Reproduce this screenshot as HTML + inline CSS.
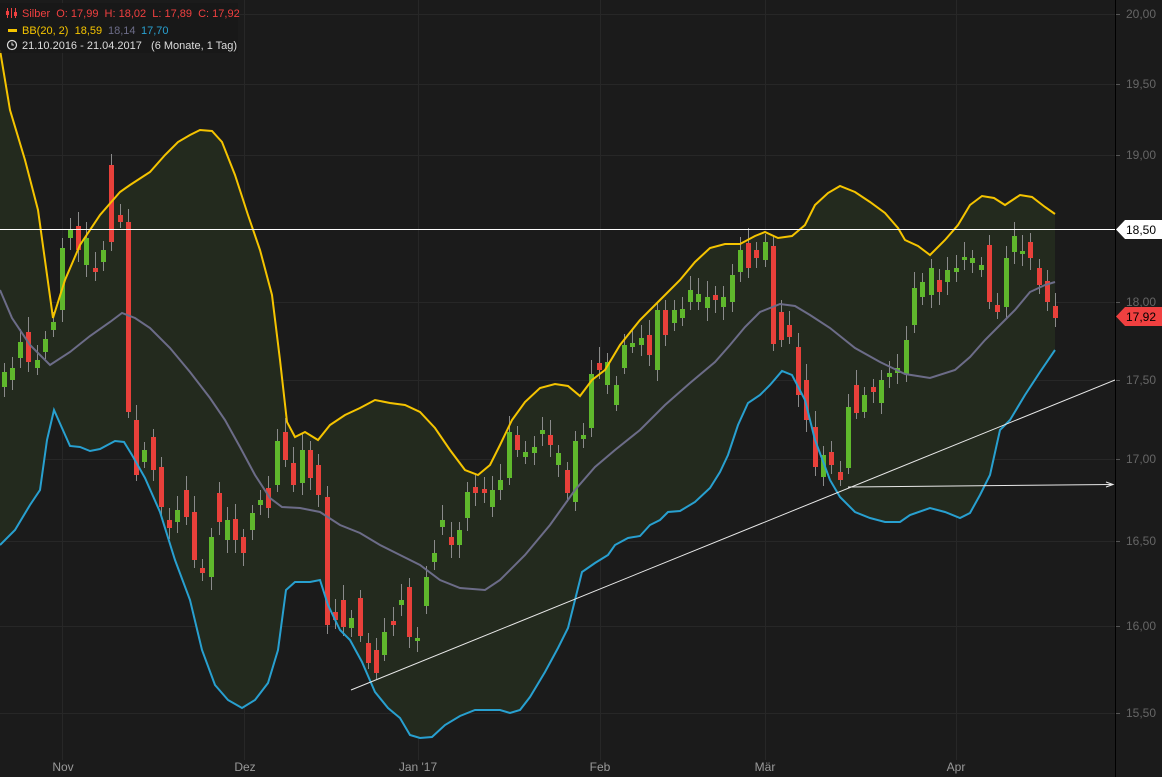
<!DOCTYPE html>
<html><head><meta charset="utf-8"><style>
html,body{margin:0;padding:0;background:#1b1b1b;width:1162px;height:777px;overflow:hidden}
svg{display:block;font-family:"Liberation Sans",sans-serif}
.pre{white-space:pre}
</style></head><body>
<svg id="s" width="1162" height="777" xmlns="http://www.w3.org/2000/svg">
<rect width="1162" height="777" fill="#1b1b1b"/>
<g stroke="#272727" stroke-width="1">
<line x1="0" y1="14.5" x2="1115" y2="14.5"/><line x1="0" y1="84.5" x2="1115" y2="84.5"/><line x1="0" y1="155.5" x2="1115" y2="155.5"/><line x1="0" y1="302.5" x2="1115" y2="302.5"/><line x1="0" y1="380.5" x2="1115" y2="380.5"/><line x1="0" y1="459.5" x2="1115" y2="459.5"/><line x1="0" y1="541.5" x2="1115" y2="541.5"/><line x1="0" y1="626.5" x2="1115" y2="626.5"/><line x1="0" y1="713.5" x2="1115" y2="713.5"/>
<line x1="62.5" y1="0" x2="62.5" y2="760"/><line x1="244.5" y1="0" x2="244.5" y2="760"/><line x1="418.5" y1="0" x2="418.5" y2="760"/><line x1="600.5" y1="0" x2="600.5" y2="760"/><line x1="765.5" y1="0" x2="765.5" y2="760"/><line x1="956.5" y1="0" x2="956.5" y2="760"/>
</g>
<polygon id="fill" fill="#232a1e"/>
<g id="candles"></g>
<polyline id="mid" fill="none" stroke="#6c6c88" stroke-width="2"/>
<polyline id="up" fill="none" stroke="#f5c400" stroke-width="2"/>
<polyline id="lo" fill="none" stroke="#28a0d0" stroke-width="2"/>
<line x1="0" y1="229.5" x2="1115" y2="229.5" stroke="#fff" stroke-width="1"/>
<line x1="351" y1="690" x2="1115" y2="380" stroke="#e8e8e8" stroke-width="1"/>
<line x1="848" y1="487" x2="1112" y2="484.5" stroke="#e8e8e8" stroke-width="1"/>
<path d="M1106 482 L1113 484.5 L1106 487" fill="none" stroke="#e8e8e8"/>
<line x1="1115.5" y1="0" x2="1115.5" y2="777" stroke="#000" stroke-width="1"/>
<g fill="#666" font-size="12">
<text x="1126" y="18">20,00</text><text x="1126" y="88">19,50</text><text x="1126" y="159">19,00</text><text x="1126" y="306">18,00</text><text x="1126" y="384">17,50</text><text x="1126" y="463">17,00</text><text x="1126" y="545">16,50</text><text x="1126" y="630">16,00</text><text x="1126" y="717">15,50</text>
</g>
<g stroke="#555"><line x1="1116" y1="14.5" x2="1120" y2="14.5"/><line x1="1116" y1="84.5" x2="1120" y2="84.5"/><line x1="1116" y1="155.5" x2="1120" y2="155.5"/><line x1="1116" y1="302.5" x2="1120" y2="302.5"/><line x1="1116" y1="380.5" x2="1120" y2="380.5"/><line x1="1116" y1="459.5" x2="1120" y2="459.5"/><line x1="1116" y1="541.5" x2="1120" y2="541.5"/><line x1="1116" y1="626.5" x2="1120" y2="626.5"/><line x1="1116" y1="713.5" x2="1120" y2="713.5"/></g>
<path d="M1116 229.5 L1125 220 H1162 V239 H1125 Z" fill="#fff"/>
<text x="1126" y="234" font-size="12" fill="#000">18,50</text>
<path d="M1116 316.5 L1125 307 H1162 V326 H1125 Z" fill="#f04040"/>
<text x="1126" y="321" font-size="12" fill="#000">17,92</text>
<g fill="#999" font-size="12" text-anchor="middle">
<text x="63" y="771">Nov</text><text x="245" y="771">Dez</text><text x="418" y="771">Jan '17</text><text x="600" y="771">Feb</text><text x="765" y="771">Mär</text><text x="956" y="771">Apr</text>
</g>
<rect x="0" y="3" width="238" height="50" fill="#171717" opacity="0.85"/>
<g font-size="11">
<g stroke="#f04040" stroke-width="1"><line x1="7.5" y1="8" x2="7.5" y2="18"/><line x1="11.5" y1="8" x2="11.5" y2="18"/><line x1="15.5" y1="8" x2="15.5" y2="18"/></g>
<rect x="6" y="11" width="3" height="4" fill="#f04040"/><rect x="14" y="12" width="3" height="4" fill="#f04040"/>
<text class="pre" x="22" y="17" fill="#f04040">Silber  O: 17,99  H: 18,02  L: 17,89  C: 17,92</text>
<rect x="8" y="29" width="9" height="3" fill="#f5c400"/>
<text class="pre" x="22" y="34" fill="#f5c400">BB(20, 2)  18,59</text>
<text x="108" y="34" fill="#6c6c88">18,14</text>
<text x="141" y="34" fill="#28a0d0">17,70</text>
<circle cx="12" cy="45" r="4.5" fill="none" stroke="#ddd" stroke-width="1.2"/>
<path d="M12 42.5 V45 H14" fill="none" stroke="#ddd" stroke-width="1"/>
<text class="pre" x="22" y="49" fill="#ddd">21.10.2016 - 21.04.2017   (6 Monate, 1 Tag)</text>
</g>
</svg>
<script>
var up=[[0,50],[10,110],[25,160],[38,210],[53,318],[65,280],[80,245],[100,215],[120,192],[130,185],[150,172],[165,155],[178,142],[190,135],[200,130],[212,131],[222,142],[235,175],[248,215],[260,250],[272,295],[280,360],[287,422],[295,437],[305,432],[318,440],[330,425],[345,415],[360,408],[375,400],[390,403],[405,405],[420,412],[435,428],[450,450],[465,470],[478,475],[490,465],[500,445],[512,420],[525,402],[540,388],[555,384],[568,386],[580,396],[592,380],[605,370],[620,345],[640,320],[660,300],[680,280],[695,262],[710,248],[725,244],[740,244],[755,236],[765,232],[778,238],[792,236],[805,225],[815,205],[828,193],[840,186],[855,192],[870,202],[885,213],[898,228],[905,240],[918,246],[930,255],[945,240],[958,225],[970,205],[982,196],[994,198],[1005,205],[1020,195],[1032,197],[1045,207],[1055,214]];
var mid=[[0,290],[12,318],[30,345],[50,365],[70,352],[90,336],[110,322],[122,313],[135,318],[150,328],[170,348],[190,372],[210,398],[225,420],[240,447],[255,475],[270,498],[282,507],[300,508],[320,512],[340,525],[360,533],[380,545],[400,555],[420,565],[440,580],[460,588],[485,590],[500,580],[525,555],[550,525],[575,490],[595,467],[615,450],[640,430],[665,405],[690,383],[715,362],[730,345],[745,327],[760,312],[780,304],[795,306],[810,315],[830,328],[855,348],[880,362],[905,374],[930,378],[955,370],[970,357],[985,340],[1000,325],[1015,310],[1030,292],[1045,285],[1055,282]];
var lo=[[0,545],[15,530],[30,505],[40,490],[47,440],[54,410],[62,428],[70,446],[80,447],[90,451],[100,449],[115,441],[124,442],[132,455],[145,478],[160,512],[175,560],[190,600],[202,650],[215,685],[228,700],[242,708],[255,700],[268,683],[278,650],[286,590],[295,582],[310,582],[320,580],[328,605],[340,630],[350,640],[362,662],[375,692],[388,708],[400,718],[410,735],[420,738],[432,737],[445,725],[460,716],[475,710],[500,710],[510,713],[520,710],[530,697],[545,672],[558,648],[568,628],[582,572],[595,563],[608,555],[615,545],[628,538],[640,536],[650,525],[660,520],[668,512],[680,511],[695,502],[710,488],[720,472],[728,455],[738,425],[748,403],[760,395],[770,385],[782,371],[792,375],[805,400],[815,440],[830,480],[840,497],[855,512],[870,518],[885,522],[900,522],[910,515],[930,508],[945,512],[960,518],[970,513],[980,495],[990,475],[1000,430],[1010,420],[1025,395],[1040,372],[1055,350]];
function s(a){return a.map(function(p){return p.join(',')}).join(' ')}
document.getElementById('up').setAttribute('points',s(up));
document.getElementById('mid').setAttribute('points',s(mid));
document.getElementById('lo').setAttribute('points',s(lo));
document.getElementById('fill').setAttribute('points',s(up)+' '+s(lo.slice().reverse()));
var c=[[4,'g',372,387],[12,'g',368,380],[20,'g',342,358],[28,'r',332,362],[37,'g',360,368],[45,'g',339,352],[53,'g',322,330],[62,'g',248,310],[70,'g',230,238],[78,'r',226,250],[86,'g',238,265],[95,'r',268,272],[103,'g',250,262],[111,'r',165,242],[120,'r',215,222],[128,'r',222,412],[136,'r',420,475],[144,'g',450,462],[153,'r',437,470],[161,'r',467,507],[169,'r',520,528],[177,'g',510,522],[186,'r',490,517],[194,'r',512,560],[202,'r',568,573],[211,'g',537,577],[219,'r',493,522],[227,'g',520,540],[235,'r',519,540],[243,'r',537,553],[252,'g',513,530],[260,'g',500,505],[268,'r',488,508],[277,'g',441,485],[285,'r',432,460],[293,'r',463,485],[302,'g',450,483],[310,'r',450,478],[318,'r',465,495],[327,'r',497,625],[335,'r',612,620],[343,'r',600,627],[351,'g',618,628],[360,'r',598,636],[368,'r',643,663],[376,'r',650,673],[384,'g',632,655],[393,'r',621,625],[401,'g',600,605],[409,'r',587,637],[417,'g',638,641],[426,'g',577,606],[434,'g',553,562],[442,'g',520,527],[451,'r',537,545],[459,'g',530,545],[467,'g',492,518],[475,'r',487,493],[484,'r',489,493],[492,'g',490,507],[500,'g',480,490],[509,'g',432,478],[517,'r',435,450],[525,'g',452,457],[534,'g',447,453],[542,'g',430,434],[550,'r',435,445],[558,'g',453,465],[567,'r',470,493],[575,'g',441,502],[583,'g',435,439],[591,'g',374,428],[599,'r',363,370],[607,'g',362,385],[616,'g',385,405],[624,'g',345,368],[632,'g',343,347],[641,'g',338,345],[649,'r',335,355],[657,'g',310,370],[665,'r',310,335],[674,'g',310,323],[682,'g',309,318],[690,'g',290,302],[698,'g',294,302],[707,'g',297,308],[715,'r',295,300],[723,'g',297,307],[732,'g',275,302],[740,'g',250,272],[748,'r',243,268],[756,'r',250,258],[765,'g',242,260],[773,'r',246,344],[781,'r',312,340],[789,'r',325,337],[798,'r',347,395],[806,'r',380,420],[815,'r',427,467],[823,'g',455,477],[831,'r',452,465],[840,'r',472,480],[848,'g',407,468],[856,'r',385,413],[864,'g',395,412],[873,'r',387,392],[881,'g',380,403],[889,'g',373,377],[897,'g',368,373],[906,'g',340,374],[914,'g',288,325],[922,'g',282,297],[931,'g',268,295],[939,'r',280,292],[947,'g',270,282],[956,'g',268,272],[964,'g',257,260],[972,'g',258,263],[981,'g',265,270],[989,'r',245,302],[997,'r',305,312],[1006,'g',258,307],[1014,'g',236,252],[1022,'g',251,254],[1030,'r',242,258],[1039,'r',268,285],[1047,'r',281,302],[1055,'r',306,318]];
var h='';
c.forEach(function(d){var x=d[0],t=d[2],b=d[3];var col=d[1]=='g'?'#5fb82c':'#e8403a';
var wt=t-8-((x*7)%9),wb=b+6+((x*5)%8);
h+='<line x1="'+(x+0.5)+'" y1="'+wt+'" x2="'+(x+0.5)+'" y2="'+wb+'" stroke="#8a8a8a" stroke-width="1"/>';
h+='<rect x="'+(x-2)+'" y="'+t+'" width="5" height="'+Math.max(2,b-t)+'" fill="'+col+'"/>';});
document.getElementById('candles').innerHTML=h;
</script>
</body></html>
